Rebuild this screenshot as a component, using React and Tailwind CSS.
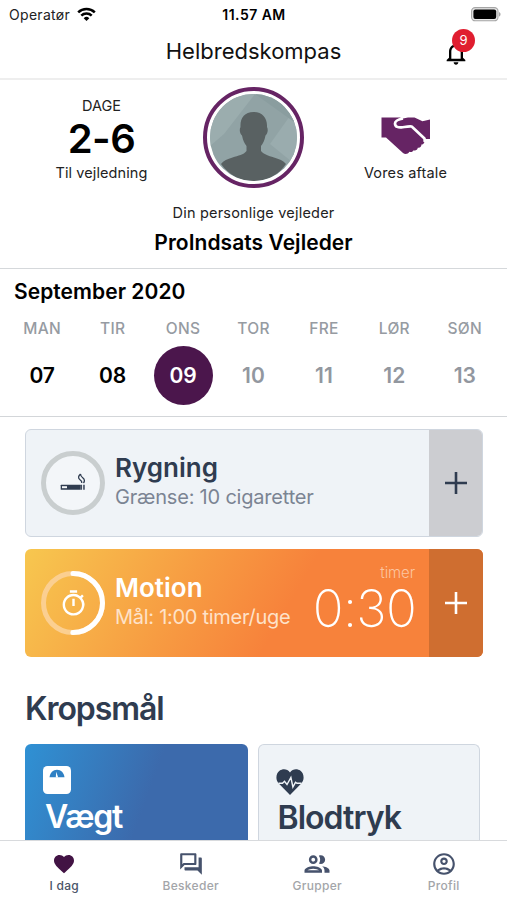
import React from "react";
import {
  MdFavorite,
  MdOutlineQuestionAnswer,
  MdOutlinePeople,
  MdOutlineAccountCircle,
  MdNotificationsNone,
  MdOutlineTimer,
} from "react-icons/md";

const DAYS = [
  { label: "MAN", date: "07", state: "past" },
  { label: "TIR", date: "08", state: "past" },
  { label: "ONS", date: "09", state: "active" },
  { label: "TOR", date: "10", state: "future" },
  { label: "FRE", date: "11", state: "future" },
  { label: "LØR", date: "12", state: "future" },
  { label: "SØN", date: "13", state: "future" },
];

const DAY_STYLES = {
  past: "text-black",
  active: "bg-[#4b164c] text-white",
  future: "text-[#92979f]",
};

const TABS = [
  { label: "I dag", icon: MdFavorite, size: 24, active: true },
  { label: "Beskeder", icon: MdOutlineQuestionAnswer, size: 26 },
  { label: "Grupper", icon: MdOutlinePeople, size: 30 },
  { label: "Profil", icon: MdOutlineAccountCircle, size: 26 },
];

const WifiIcon = () => (
  <svg width="19" height="15" viewBox="0 0 19 15" fill="none" stroke="#000" strokeWidth="2.5">
    <path d="M1.2 5.4a11.8 11.8 0 0 1 16.6 0" />
    <path d="M4.3 8.6a7.4 7.4 0 0 1 10.4 0" />
    <path d="M9.5 14 6.7 11.2a4 4 0 0 1 5.6 0z" fill="#000" stroke="none" />
  </svg>
);

const BatteryIcon = () => (
  <svg width="30" height="15" viewBox="0 0 30 15">
    <rect x="0.6" y="0.6" width="26.4" height="13.2" rx="3.6" fill="#e8e8e8" stroke="#a5a5a5" strokeWidth="1.1" />
    <rect x="2.4" y="2.4" width="22.8" height="9.6" rx="2" fill="#000" />
    <path d="M28 5c2 .8 2 3.8 0 4.6z" fill="#a5a5a5" />
  </svg>
);

const HandshakeIcon = () => (
  <svg width="50" height="38" viewBox="0 0 50 38">
    <path
      d="M.5.500H18.500L22 1.500 27 .500h6.500l8 3.700L49 2.500V22h-5l-1 1.500c1 2.200-.4 4-2.600 4 .2 2.200-1.400 3.600-3.600 3.200-.4 2.200-2.200 3.200-4.200 2.500-.8 1.700-2.600 2.200-4.200 1.500-1.400 2.400-4.200 3-6.400 1.300L5 20.500H.5z"
      fill="#662464"
    />
    <path
      d="M22 1.500c-4 .8-8 2-8 4.900 0 3.600 3.500 4.300 6.500 4 3.500-.4 6-1.200 10.200-.9L43.500 21.500l.3 3.500"
      fill="none"
      stroke="#fff"
      strokeWidth="2.7"
      strokeLinejoin="round"
    />
  </svg>
);

const Avatar = () => (
  <div className="size-[101px] rounded-full border-4 border-[#662464] bg-white p-[3px]">
    <svg className="size-full rounded-full" viewBox="0 0 87 87">
      <rect width="87" height="87" fill="#91a3a5" />
      <path d="M0 0h45L14 40 0 52z" fill="#9badae" />
      <path d="M87 12 60 50l27 22z" fill="#9aacae" />
      <path d="M45 0 87 30V0z" fill="#8a9d9f" />
      <path
        d="M43.500 18c-9 0-13.500 6-13 15-1.500 3-.5 7 1.500 8.500 1 5 2.500 8 4.500 10.500v5c-3 4-8 4.500-14 6.500-5 1.500-9 3-11.500 6.500C19 81 30 87 43.500 87S69 81 76 70c-2.500-3.500-7-5-12-6.500-6-2-10-3-13-6.500v-5c2-2.500 3.500-5.500 4.500-10.500 2-1.500 3-5.500 1.500-8.500.5-9-4.500-15-13.500-15z"
        fill="#596162"
      />
    </svg>
  </div>
);

const SmokingIcon = () => (
  <svg className="mb-[2px]" width="26" height="18" viewBox="0 0 26 18">
    <rect x="0.7" y="11.7" width="20" height="5" rx="0.5" fill="#2f3c50" />
    <rect x="2" y="13.2" width="5" height="2" fill="#f5f8fa" />
    <path d="M21.3 11.700v5" stroke="#2f3c50" strokeWidth="1.2" />
    <path d="M23.900 11.700v5" stroke="#5d6778" strokeWidth="2" />
    <path
      d="M20.500 1c-2.500 2.200-2.500 4.300-.5 5.700 1.500 1 2 2 1.800 3.300M20.500 1c.2 2 .8 2.800 2.200 3.800 2 1.400 2.200 3.400.8 5.200"
      fill="none"
      stroke="#2f3c50"
      strokeWidth="1.3"
    />
  </svg>
);

const ScaleIcon = () => (
  <svg width="28" height="28" viewBox="0 0 28 28">
    <rect width="28" height="28" rx="4.5" fill="#fff" />
    <path d="M6.500 11.300C7 6.700 10 3.700 14 3.700s7 3 7.500 7.600z" fill="#2f80c4" />
    <path d="M13.200 5.800 12.800 11.500h2.400z" fill="#fff" />
  </svg>
);

const HeartbeatIcon = () => (
  <svg width="28" height="26" viewBox="0 0 28 26">
    <path
      d="M14 26 3 14.700C-1 10.500 0 4.500 3.500 1.800 7-.8 11.500 0 14 3.400 16.500 0 21-.8 24.500 1.800 28 4.500 29 10.500 25 14.700z"
      fill="#2f3c50"
    />
    <path
      d="M2.500 14.300h4l2-2 2.500 3.200 3.900-7 2 9.500 2.600-4.700 1.500 1h4.500"
      fill="none"
      stroke="#eff3f7"
      strokeWidth="1.4"
    />
  </svg>
);

const PlusIcon = () => (
  <svg width="22" height="22" viewBox="0 0 22 22" stroke="currentColor" strokeWidth="2.6">
    <path d="M11 0v22M0 11h22" />
  </svg>
);

const ProgressRing = ({ track, fill = "none", progress = 0, children }) => {
  const length = 2 * Math.PI * 29.5;
  return (
    <div className="grid size-16 shrink-0 place-items-center">
      <svg className="col-start-1 row-start-1" width="64" height="64" fill="none" strokeWidth="5">
        <g transform="rotate(-90 32 32)">
          <circle cx="32" cy="32" r="29.5" stroke={track} fill={fill} />
          {progress > 0 && (
            <circle
              cx="32"
              cy="32"
              r="29.5"
              stroke="#fff"
              strokeLinecap="round"
              strokeDasharray={`${length * progress} ${length}`}
            />
          )}
        </g>
      </svg>
      <div className="z-10 col-start-1 row-start-1">{children}</div>
    </div>
  );
};

const StatusBar = () => (
  <div className="grid h-7 grid-cols-3 items-center pl-[9px] pr-[6px]">
    <div className="flex items-center gap-[7px] text-[14px] tracking-[0.3px] text-[#222]">
      Operatør <WifiIcon />
    </div>
    <span className="pr-[2px] text-center text-[14px] font-semibold tracking-[0.45px]">11.57 AM</span>
    <div className="flex justify-end">
      <BatteryIcon />
    </div>
  </div>
);

const Header = () => (
  <header className="grid h-[52px] grid-cols-[80px_1fr_80px] items-center border-b-2 border-[#eee]">
    <h1 className="col-start-2 pb-[3px] text-center text-[22px] text-[#111]">Helbredskompas</h1>
    <button className="relative ml-[15px] w-[28px]">
      <MdNotificationsNone size={28} />
      <span className="absolute -top-[10px] left-[10px] flex size-[23px] items-center justify-center rounded-full bg-[#e01e30] text-[13px] text-white">
        9
      </span>
    </button>
  </header>
);

const Advisor = () => (
  <section className="h-[189px] border-b border-[#d5d8db] pt-[7px] text-[#222]">
    <div className="grid h-[101px] grid-cols-[203px_101px_1fr]">
      <div className="flex flex-col items-center pt-[9px]">
        <span className="text-[14.5px] leading-5">DAGE</span>
        <span className="text-[40px] font-semibold leading-[46px] tracking-[-0.5px] text-black">2-6</span>
        <span className="mt-px text-[14.5px] leading-5 tracking-[0.1px]">Til vejledning</span>
      </div>
      <Avatar />
      <div className="flex flex-col items-center pt-[30px]">
        <HandshakeIcon />
        <span className="mt-[8px] text-[14.5px] leading-5 tracking-[0.15px]">Vores aftale</span>
      </div>
    </div>
    <p className="mt-[15px] text-center text-[14.5px] leading-5 tracking-[0.2px]">Din personlige vejleder</p>
    <p className="mt-[6px] text-center text-[21px] font-semibold leading-7 tracking-[0.05px] text-black">
      ProIndsats Vejleder
    </p>
  </section>
);

const Calendar = () => (
  <section className="h-[148px] border-b border-[#d3d6d9] pt-[9px]">
    <h2 className="pl-[14px] text-[21px] font-semibold leading-7 tracking-[0.05px]">September 2020</h2>
    <div className="mt-[13px] grid grid-cols-7 px-[7px]">
      {DAYS.map(day => (
        <div key={day.label} className="flex flex-col items-center">
          <span className="text-[15.5px] font-medium leading-5 tracking-[0.3px] text-[#969ba2]">{day.label}</span>
          <span
            className={`mt-[7px] flex size-[59px] items-center justify-center rounded-full text-[21px] font-semibold ${DAY_STYLES[day.state]}`}
          >
            {day.date}
          </span>
        </div>
      ))}
    </div>
  </section>
);

const Activities = () => (
  <section className="flex flex-col gap-3 pl-[25px] pr-[24px] pt-[12px]">
    <div className="flex h-[108px] overflow-hidden rounded-md border border-[#cfd6df] bg-[#eff3f7] text-[#2f3c50]">
      <div className="flex flex-1 items-center pl-[15px]">
        <ProgressRing track="#c9cecf" fill="#f3f6f9">
          <SmokingIcon />
        </ProgressRing>
        <div className="ml-[10px] pb-[2px]">
          <h3 className="text-[26px] font-semibold leading-[30px]">Rygning</h3>
          <p className="text-[20px] leading-7 tracking-[-0.2px] text-[#7b8493]">Grænse: 10 cigaretter</p>
        </div>
      </div>
      <button className="flex w-[53px] items-center justify-center bg-[#cccdd1]">
        <PlusIcon />
      </button>
    </div>

    <div className="flex h-[108px] overflow-hidden rounded-md bg-[linear-gradient(120deg,#f7c74f_0%,#f79c42_35%,#f7823b_57%,#f7823b_100%)] text-white">
      <div className="flex flex-1 items-center pl-[16px]">
        <ProgressRing track="#fbcf91" progress={0.5}>
          <MdOutlineTimer size={29} />
        </ProgressRing>
        <div className="ml-[10px] pb-[2px]">
          <h3 className="text-[26px] font-semibold leading-[30px]">Motion</h3>
          <p className="text-[20px] leading-7 tracking-[-0.28px] text-[#fee2c9]">Mål: 1:00 timer/uge</p>
        </div>
        <div className="ml-auto pb-[4px] pr-[14px] text-right">
          <p className="text-[15px] font-light leading-4 tracking-[-0.1px] text-[#fcc5a0]">timer</p>
          <p className="-mr-px text-[51px] font-extralight leading-[56px] tracking-[-0.7px]">0:30</p>
        </div>
      </div>
      <button className="flex w-[54px] items-center justify-center bg-[#cf6e30]">
        <PlusIcon />
      </button>
    </div>
  </section>
);

const Measurements = () => (
  <section className="flex min-h-0 flex-1 flex-col pl-[25px] pr-[27px] pt-[32px]">
    <h2 className="text-[32px] font-semibold leading-10 tracking-[-1.05px] text-[#2f3c50]">Kropsmål</h2>
    <div className="mt-[15px] grid min-h-0 flex-1 grid-cols-2 gap-[10px]">
      <div className="rounded-t-md bg-[linear-gradient(110deg,#2f91d4_0%,#3c6aac_55%,#3c6aac_100%)] pl-[18px] pt-[22px] text-white">
        <ScaleIcon />
        <h3 className="mt-[5px] pl-[2px] text-[32px] font-semibold leading-[36px] tracking-[-1.2px]">Vægt</h3>
      </div>
      <div className="rounded-t-md border border-b-0 border-[#cfd6df] bg-[#eff3f7] pl-[17px] pt-[24px] text-[#2f3c50]">
        <HeartbeatIcon />
        <h3 className="mt-[5px] pl-[2px] text-[32px] font-semibold leading-[36px] tracking-[-0.95px]">Blodtryk</h3>
      </div>
    </div>
  </section>
);

const TabBar = () => (
  <nav className="grid h-[60px] shrink-0 grid-cols-4 border-t border-[#d8dadd] bg-white pl-px">
    {TABS.map(({ label, icon: Icon, size, active }) => (
      <button key={label} className="flex flex-col items-center pt-[10px]">
        <span className="flex h-[26px] items-center justify-center">
          <Icon size={size} className={active ? "text-[#421344]" : "text-[#46526c]"} />
        </span>
        <span
          className={`text-[12px] font-medium leading-[18px] tracking-[0.3px] ${
            active ? "text-[#4a5468]" : "text-[#a3a5a9]"
          }`}
        >
          {label}
        </span>
      </button>
    ))}
  </nav>
);

const App = () => (
  <div className="flex h-[900px] w-[507px] flex-col overflow-hidden bg-white font-[Inter,sans-serif] text-black">
    <StatusBar />
    <Header />
    <Advisor />
    <Calendar />
    <Activities />
    <Measurements />
    <TabBar />
  </div>
);

export default App;
